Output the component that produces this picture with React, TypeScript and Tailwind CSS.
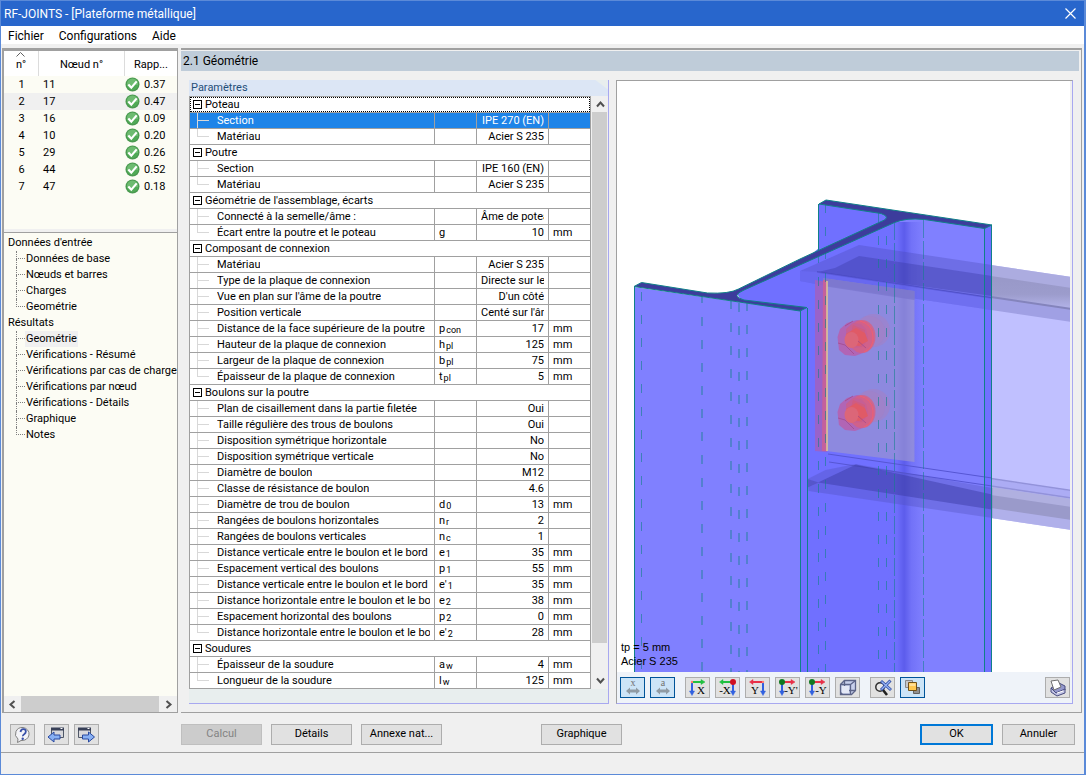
import React, { useState } from 'react';
import clsx from 'clsx';

interface Param {
  label: string;
  symbol?: string;
  sub?: string;
  value: string;
  unit?: string;
}

interface Group {
  title: string;
  params: Param[];
}

const NODES = [
  { node: '11', ratio: '0.37' },
  { node: '17', ratio: '0.47' },
  { node: '16', ratio: '0.09' },
  { node: '10', ratio: '0.20' },
  { node: '29', ratio: '0.26' },
  { node: '44', ratio: '0.52' },
  { node: '47', ratio: '0.18' },
];

const TREE = [
  { title: "Données d'entrée", items: ['Données de base', 'Nœuds et barres', 'Charges', 'Geométrie'] },
  {
    title: 'Résultats',
    items: [
      'Geométrie',
      'Vérifications - Résumé',
      'Vérifications par cas de charge',
      'Vérifications par nœud',
      'Vérifications - Détails',
      'Graphique',
      'Notes',
    ],
  },
];

const GROUPS: Group[] = [
  {
    title: 'Poteau',
    params: [
      { label: 'Section', value: 'IPE 270 (EN)' },
      { label: 'Matériau', value: 'Acier S 235' },
    ],
  },
  {
    title: 'Poutre',
    params: [
      { label: 'Section', value: 'IPE 160 (EN)' },
      { label: 'Matériau', value: 'Acier S 235' },
    ],
  },
  {
    title: "Géométrie de l'assemblage, écarts",
    params: [
      { label: 'Connecté à la semelle/âme :', value: 'Âme de poteau' },
      { label: 'Écart entre la poutre et le poteau', symbol: 'g', value: '10', unit: 'mm' },
    ],
  },
  {
    title: 'Composant de connexion',
    params: [
      { label: 'Matériau', value: 'Acier S 235' },
      { label: 'Type de la plaque de connexion', value: 'Directe sur le' },
      { label: "Vue en plan sur l'âme de la poutre", value: "D'un côté" },
      { label: 'Position verticale', value: "Centé sur l'âme" },
      { label: 'Distance de la face supérieure de la poutre', symbol: 'p', sub: 'con', value: '17', unit: 'mm' },
      { label: 'Hauteur de la plaque de connexion', symbol: 'h', sub: 'pl', value: '125', unit: 'mm' },
      { label: 'Largeur de la plaque de connexion', symbol: 'b', sub: 'pl', value: '75', unit: 'mm' },
      { label: 'Épaisseur de la plaque de connexion', symbol: 't', sub: 'pl', value: '5', unit: 'mm' },
    ],
  },
  {
    title: 'Boulons sur la poutre',
    params: [
      { label: 'Plan de cisaillement dans la partie filetée', value: 'Oui' },
      { label: 'Taille régulière des trous de boulons', value: 'Oui' },
      { label: 'Disposition symétrique horizontale', value: 'No' },
      { label: 'Disposition symétrique verticale', value: 'No' },
      { label: 'Diamètre de boulon', value: 'M12' },
      { label: 'Classe de résistance de boulon', value: '4.6' },
      { label: 'Diamètre de trou de boulon', symbol: 'd', sub: '0', value: '13', unit: 'mm' },
      { label: 'Rangées de boulons horizontales', symbol: 'n', sub: 'r', value: '2' },
      { label: 'Rangées de boulons verticales', symbol: 'n', sub: 'c', value: '1' },
      { label: 'Distance verticale entre le boulon et le bord', symbol: 'e', sub: '1', value: '35', unit: 'mm' },
      { label: 'Espacement vertical des boulons', symbol: 'p', sub: '1', value: '55', unit: 'mm' },
      { label: 'Distance verticale entre le boulon et le bord', symbol: "e'", sub: '1', value: '35', unit: 'mm' },
      { label: 'Distance horizontale entre le boulon et le bord', symbol: 'e', sub: '2', value: '38', unit: 'mm' },
      { label: 'Espacement horizontal des boulons', symbol: 'p', sub: '2', value: '0', unit: 'mm' },
      { label: 'Distance horizontale entre le boulon et le bord', symbol: "e'", sub: '2', value: '28', unit: 'mm' },
    ],
  },
  {
    title: 'Soudures',
    params: [
      { label: 'Épaisseur de la soudure', symbol: 'a', sub: 'w', value: '4', unit: 'mm' },
      { label: 'Longueur de la soudure', symbol: 'l', sub: 'w', value: '125', unit: 'mm' },
    ],
  },
];

const Chevron: React.FC<{ d: string }> = ({ d }) => (
  <svg width="9" height="9" viewBox="0 0 9 9" fill="none" stroke="#505050" strokeWidth="2">
    <path d={d} />
  </svg>
);

const CheckIcon = () => (
  <svg width="15" height="15" viewBox="0 0 15 15" className="shrink-0">
    <circle cx="7.5" cy="7.5" r="7" fill="#4a9a50" />
    <circle cx="7.5" cy="7" r="5.6" fill="#6dbb70" />
    <path d="M2 8a5.6 5.6 0 0 0 11 0z" fill="#4faa55" />
    <path d="M3.3 7.4l3 3.2 5.4-6.2" fill="none" stroke="#fff" strokeWidth="2.2" />
  </svg>
);

/* ---------- sidebar ---------- */

const NodeList = () => (
  <div className="h-[179px] shrink-0 border-t border-[#a0a0a0] bg-[#fcfcf4]">
    <table className="w-full table-fixed border-separate border-spacing-0">
      <thead>
        <tr className="h-[25px] bg-white">
          <th className="relative w-[35px] border-r border-[#dcdcdc] p-0 pt-1 font-normal">
            n°
            <svg className="absolute top-px left-3" width="9" height="5" viewBox="0 0 9 5" fill="none" stroke="#606060">
              <path d="M.5 4.5l4-4 4 4" />
            </svg>
          </th>
          <th className="w-[86px] border-r border-[#dcdcdc] p-0 pt-1 font-normal">Nœud n°</th>
          <th className="p-0 pt-1 font-normal">Rapp...</th>
        </tr>
      </thead>
      <tbody>
        {NODES.map((row, i) => (
          <tr key={row.node} className={clsx('h-[17px] leading-4', i === 1 && 'bg-[#f0f0f0]')}>
            <td className="p-0 text-center">{i + 1}</td>
            <td className="p-0 pl-1">{row.node}</td>
            <td className="p-0">
              <div className="flex items-center gap-1">
                <CheckIcon />
                {row.ratio}
              </div>
            </td>
          </tr>
        ))}
      </tbody>
    </table>
  </div>
);

const Tree = () => {
  const [active, setActive] = useState('1-0');
  return (
    <nav className="flex-1 overflow-hidden bg-[#fcfcf4] pt-0.5 leading-4 whitespace-nowrap">
      {TREE.map((section, s) => (
        <div key={section.title}>
          <div className="pl-1">{section.title}</div>
          <ul>
            {section.items.map((item, i) => {
              const last = i === section.items.length - 1;
              return (
                <li key={item} className="flex h-4">
                  <span className="ml-3 w-[9px] shrink-0">
                    <span className="block h-2 border-b border-l border-dotted border-[#808080]" />
                    {!last && <span className="block h-2 border-l border-dotted border-[#808080]" />}
                  </span>
                  <a
                    href="#"
                    onClick={() => setActive(`${s}-${i}`)}
                    className={clsx('px-px', active === `${s}-${i}` && 'bg-[#f0f0f0]')}
                  >
                    {item}
                  </a>
                </li>
              );
            })}
          </ul>
        </div>
      ))}
    </nav>
  );
};

const Sidebar = () => (
  <aside className="flex w-[176px] shrink-0 flex-col border-2 border-r border-b border-[#a0a0a0]">
    <NodeList />
    <div className="h-1 shrink-0 border-b border-[#a0a0a0] bg-[#f0f0f0]" />
    <Tree />
    <div className="flex h-4 shrink-0 items-center bg-[#f0f0f0]">
      <button aria-label="Défiler à gauche" className="flex w-[17px] justify-center">
        <Chevron d="M6.5 1l-4 3.5 4 3.5" />
      </button>
      <div className="h-full flex-1 bg-[#cdcdcd]" />
      <button aria-label="Défiler à droite" className="flex w-[18px] justify-center">
        <Chevron d="M2.5 1l4 3.5-4 3.5" />
      </button>
    </div>
  </aside>
);

/* ---------- parameter grid ---------- */

const CELL = 'h-4 border-r border-b border-[#a0a0a0] p-0 leading-[15px]';

const ParamRow: React.FC<{ param: Param; last: boolean; selected: boolean; onSelect: () => void }> = ({
  param,
  last,
  selected,
  onSelect,
}) => (
  <tr onClick={onSelect} className={clsx(selected && 'bg-[#1e84e8] text-white')}>
    <td className={CELL}>
      <div className="flex h-[15px]">
        <span className="ml-[7px] w-3 shrink-0">
          <span className="block h-2 border-b border-l border-[#d8d8d8]" />
          {!last && <span className="block h-[7px] border-l border-[#d8d8d8]" />}
        </span>
        <span className="mr-1 ml-2 overflow-hidden whitespace-nowrap">{param.label}</span>
      </div>
    </td>
    <td className={clsx(CELL, 'pl-1')}>
      <div className="flex h-[15px] gap-px">
        {param.symbol}
        {param.sub && <span className="pt-0.5 text-[9px]">{param.sub}</span>}
      </div>
    </td>
    <td className={CELL}>
      <div className="mx-1 h-[15px] overflow-hidden text-right whitespace-nowrap">{param.value}</div>
    </td>
    <td className={clsx(CELL, 'pl-1')}>{param.unit}</td>
  </tr>
);

const ParamGrid = () => {
  const [selected, setSelected] = useState('0-0');
  const [closed, setClosed] = useState<number[]>([]);

  const toggle = (g: number) => setClosed(closed.includes(g) ? closed.filter((x) => x !== g) : [...closed, g]);

  return (
    <section className="flex w-[420px] shrink-0 flex-col border-r border-b border-[#a8a8f0] bg-[#e8eeee]">
      <h2 className="h-4 bg-[#dce6f5] pl-0.5 leading-4 text-[#1f4e79] [clip-path:polygon(0_0,97%_0,100%_60%,100%_100%,0_100%)]">
        Paramètres
      </h2>
      <div className="flex bg-[#f0f0f0]">
        <table className="w-[402px] table-fixed border-separate border-spacing-0 border-t border-l border-[#a0a0a0] bg-white">
          <colgroup>
            <col />
            <col className="w-[42px]" />
            <col className="w-[72px]" />
            <col className="w-[42px]" />
          </colgroup>
          <tbody>
            {GROUPS.map((group, g) => (
              <React.Fragment key={group.title}>
                <tr>
                  <td colSpan={4} className={CELL}>
                    <div
                      className={clsx(
                        'flex h-[15px] items-center gap-[3px] pl-[3px]',
                        g === 0 && 'outline-1 -outline-offset-1 outline-dotted outline-black',
                      )}
                    >
                      <button
                        aria-label={`Réduire ${group.title}`}
                        onClick={() => toggle(g)}
                        className="flex h-[9px] w-[9px] items-center justify-center border border-black bg-white"
                      >
                        <span className="h-px w-[5px] bg-black" />
                      </button>
                      {group.title}
                    </div>
                  </td>
                </tr>
                {!closed.includes(g) &&
                  group.params.map((param, i) => (
                    <ParamRow
                      key={i}
                      param={param}
                      last={i === group.params.length - 1}
                      selected={selected === `${g}-${i}`}
                      onSelect={() => setSelected(`${g}-${i}`)}
                    />
                  ))}
              </React.Fragment>
            ))}
          </tbody>
        </table>
        <div className="ml-px flex flex-1 flex-col">
          <button aria-label="Défiler vers le haut" className="flex h-4 items-center justify-center">
            <Chevron d="M1 6.5l3.5-4 3.5 4" />
          </button>
          <div className="mr-px flex-1 bg-[#cdcdcd]" />
          <button aria-label="Défiler vers le bas" className="flex h-[46px] items-end justify-center pb-1">
            <Chevron d="M1 2.5l3.5 4 3.5-4" />
          </button>
        </div>
      </div>
      <div className="h-3" />
    </section>
  );
};

/* ---------- 3D view ---------- */

const Bolt: React.FC<{ dy: number }> = ({ dy }) => (
  <g transform={`translate(0 ${dy})`}>
    <circle cx="873.5" cy="330.5" r="16.5" fill="#b07cb8" opacity=".4" />
    <circle cx="869" cy="332" r="16" fill="#b07cb8" opacity=".25" />
    <path
      d="M837.5 337l2.5-8 7-6 10-3 9 2 7 8 1 10-4 9-7 4-8 3-10-1-6-5z"
      fill="#b562b0"
      opacity=".9"
    />
    <ellipse cx="862" cy="336.5" rx="13.5" ry="16.5" fill="#d8607f" opacity=".8" />
    <path d="M846 329l7-6 8 1 5 5 2 9-5 9-9 1-7-4z" fill="#c65f94" />
    <path d="M853 325l12 5-3 17-14-2z" fill="#d05c80" />
    <path d="M846 334l10-6 9 5 3 8-9 5-11-2z" fill="#e05a66" />
    <ellipse cx="851.5" cy="340" rx="7" ry="8" fill="#dc6678" />
    <path d="M860 321q12 3 13 15t-9 16" fill="none" stroke="#f06070" />
    <path d="M838 343l7 2 9 9M845 326l8-5M866 348l-8-7" fill="none" stroke="#a04888" strokeWidth=".7" />
  </g>
);

const JointView = () => (
  <svg viewBox="617 81 454 591" preserveAspectRatio="xMinYMin slice" className="absolute inset-0 h-full w-full">
    <defs>
      <linearGradient id="fillet">
        <stop offset="0" stopColor="#7070ff" />
        <stop offset=".25" stopColor="#6e6efc" />
        <stop offset=".45" stopColor="#5c5cec" />
        <stop offset=".65" stopColor="#7272f8" />
        <stop offset="1" stopColor="#8080ff" />
      </linearGradient>
      <linearGradient id="flange" x1="0" y1="0" x2="0" y2="1">
        <stop offset="0" stopColor="#9898c8" />
        <stop offset=".55" stopColor="#9c9ccc" />
        <stop offset="1" stopColor="#b4b4ea" />
      </linearGradient>
    </defs>

    {/* beam, part to the right of the column */}
    <path d="M991 265l80 12v253l-80-12z" fill="#c0c0ff" />
    <path d="M991 265l80 12v12l-80-12z" fill="#acace0" />
    <path d="M991 276l80 12v21l-80-12z" fill="url(#flange)" />
    <path d="M991 297l80 12v13l-80-12z" fill="#a0a0e4" />
    <path d="M991 297l80 12" stroke="#8484bc" strokeWidth="2" />
    <path d="M991 479l80 12v16l-80-12z" fill="#acacf4" />
    <path d="M991 478.5l80 12M991 486l80 12" stroke="#9292da" strokeWidth="1.5" />
    <path d="M991 487l80 12v22l-80-12z" fill="#b0b0e0" />
    <path d="M991 495l80 12v14l-80-12z" fill="#9a9aca" />
    <path d="M991 508l80 12v10l-80-12z" fill="#b0b0ea" />

    {/* column */}
    <path d="M819 204l173 22v446H819z" fill="#8080ff" />
    <path d="M807 258L819 248V204l60 9 10 6 6 3v450h-88z" fill="#7070ff" />
    <path d="M736 292L889 220l6 3v449h-95V312L742 302z" fill="#7070ff" />
    <path d="M888 222h36v450h-36z" fill="url(#fillet)" />
    <path d="M984 228l7.5-3v447H984z" fill="#7070ff" />
    <path d="M634 287l166 24v361H634z" fill="#8080ff" />
    <path d="M800 311l7.5-3v364H800z" fill="#7070ff" />

    {/* beam flanges seen through the column */}
    <path d="M800 271l59-26 133 20v45l-176-26-16-3z" fill="#4848b0" opacity=".32" />
    <path d="M835 268l24-12 133 20v20l-174-24z" fill="#3838a0" opacity=".36" />
    <path d="M817 272l175 26" stroke="#4444b8" strokeWidth="1.5" opacity=".75" />
    <path d="M800 271l18 1 174 26v12l-176-26-16-3z" fill="#7070ff" opacity=".4" />
    <path d="M828 454l164 24M829 462l163 24" stroke="#5656d4" strokeWidth="1" fill="none" />
    <path d="M807.5 479l18-9 30-6 137 24v30l-184-27z" fill="#5050b8" opacity=".34" />
    <path d="M818 482.5l38-18 136 30v15z" fill="#3838a0" opacity=".45" />
    <path d="M807.5 479l11 3.5-11 5z" fill="#4848b0" opacity=".5" />

    {/* connection plate */}
    <path d="M823 278l91.500 13v171L826 451z" fill="#a09acc" opacity=".62" />
    <path d="M823 278l91.500 13v9L823 286z" fill="#7470c8" opacity=".6" />
    <path d="M815 280l12 2v170l-12-1z" fill="#a060c0" opacity=".85" />
    <path d="M823 280h3.5v171H822z" fill="#c4609c" />
    <path d="M827 281v170" stroke="#e4c890" strokeWidth="1.5" />
    <Bolt dy={0} />
    <Bolt dy={75} />

    {/* column edges */}
    <g stroke="#108088" strokeWidth="1" fill="none">
      <path d="M634.5 287v385M807.5 308v364M818.5 204v50M991.5 225v447" />
      <path d="M800.5 311v361M984.5 228v444" />
      <path d="M894.5 222v450M923.5 220v452" strokeDasharray="18 3" opacity=".55" />
      <path
        d="M641.5 292v380M818.5 254v418M825.5 204v468M878.5 213v459M886.5 236v436"
        strokeDasharray="9 14"
        opacity=".6"
      />
      <path
        d="M702 294v378M731 300v372M739 303v369M747 302v370"
        strokeDasharray="9 14"
        strokeWidth="2"
        opacity=".4"
      />
    </g>

    {/* cut face of the I profile */}
    <path
      d="M634 286.5l7.5-4 66 10.5q22 1 31-4L800 259l79-36.500q14-5 2-9L819 204l7-4 166 25-7.5 3.500-60-9q-18-2-30 3L744 290q-14 6 0 10l63 7.5-7 3.500z"
      fill="#3c3c9c"
      stroke="#108088"
    />
  </svg>
);

/* ---------- view toolbar ---------- */

const AxisIcon: React.FC<{ label: string; color: string; flip?: boolean; dot?: string }> = ({
  label,
  color,
  flip,
  dot,
}) => (
  <svg width="20" height="18" viewBox="0 0 20 18">
    <g stroke={color} strokeWidth="2" fill={color}>
      <path d={flip ? 'M5 3h10' : 'M4 3h9'} />
      <path d={flip ? 'M5 0.5v5L1.5 3z' : 'M13 .5v5L17 3z'} strokeWidth="0.5" />
    </g>
    <g stroke="#3060e0" strokeWidth="2" fill="#3060e0">
      <path d={flip ? 'M15 3v10' : 'M4 3v10'} />
      <path d={flip ? 'M12.5 12h5L15 16.5z' : 'M1.5 12h5L4 16.5z'} strokeWidth="0.5" />
    </g>
    <circle cx={flip ? 15 : 4} cy="3" r={dot ? 3 : 1.2} fill={dot || '#ff8070'} />
    <text
      x={flip ? 7 : 13}
      y="15"
      textAnchor="middle"
      fontSize="11"
      fontFamily="Liberation Serif, serif"
      fill="#000"
    >
      {label}
    </text>
  </svg>
);

const DimIcon: React.FC<{ label: string }> = ({ label }) => (
  <svg width="18" height="18" viewBox="0 0 18 18">
    <text x="9" y="7" textAnchor="middle" fontSize="10" fontFamily="Liberation Serif, serif" fill="#707070">
      {label}
    </text>
    <path d="M2 12l4-3.500v2h6v-2l4 3.500-4 3.500v-2H6v2z" fill="#909ba4" />
  </svg>
);

const CubeIcon = () => (
  <svg width="18" height="18" viewBox="0 0 18 18" strokeWidth="1.3" stroke="#5c6488">
    <path d="M1.5 5.500l4-4h11v10l-4 4h-11z" fill="#c8d0ec" />
    <path d="M1.5 5.500h10v10M11.500 5.500l5-4M5.500 1.500v10h11M5.500 11.500l-4 4" fill="none" />
    <path d="M3 7h7v7H3z" fill="#e4e8f6" stroke="none" />
  </svg>
);

const SearchOffIcon = () => (
  <svg width="18" height="18" viewBox="0 0 18 18" fill="none">
    <circle cx="6" cy="8" r="4.200" fill="#e8e8e8" stroke="#303030" strokeWidth="1.500" />
    <path d="M9 11l4 5" stroke="#202020" strokeWidth="2.600" />
    <path d="M7 2l10 9M16.500 1.500L7 11" stroke="#3050a8" strokeWidth="3" />
    <path d="M7.500 2.500l9 8M16 2l-8.500 8.500" stroke="#98b4f4" strokeWidth="1.200" />
  </svg>
);

const LayersIcon = () => (
  <svg width="17" height="17" viewBox="0 0 17 17">
    <path d="M1.5 1.500h7v7h-7z" fill="#c8c8c8" stroke="#888" />
    <path d="M9.500 8.500h6v6h-6z" fill="#909090" stroke="#606060" />
    <path d="M4.500 3.500h8v8h-8z" fill="#ffc850" stroke="#705018" />
    <path d="M5.500 4.500h6v2.500h-6z" fill="#ffe09a" />
  </svg>
);

const PrinterIcon = () => (
  <svg width="18" height="18" viewBox="0 0 18 18" stroke="#484c80">
    <path d="M2 9l5 5 9-3V7l-6-3z" fill="#9498cc" />
    <path d="M2 9v4l6 4 8-3v-4l-9 4z" fill="#c4c6e6" />
    <path d="M2 2l7-1 3 7-7 3z" fill="#fff" stroke="#707070" />
    <path d="M8 14l6-2" stroke="#fff" />
  </svg>
);

const ToolButton: React.FC<{ label: string; pressed?: boolean; children: React.ReactNode }> = ({
  label,
  pressed,
  children,
}) => (
  <button
    aria-label={label}
    aria-pressed={pressed}
    className={clsx(
      'flex h-[21px] w-[25px] shrink-0 items-center justify-center border',
      pressed ? 'border-[#005499] bg-[#cce4f7]' : 'border-[#adadad] bg-[#e1e1e1]',
    )}
  >
    {children}
  </button>
);

const Viewer = () => (
  <section className="flex min-w-0 flex-1 flex-col border border-[#a8a8f0] border-t-[#a0a0a0] border-l-[#a0a0a0]">
    <div className="relative mr-0.5 flex-1 overflow-hidden bg-white">
      <JointView />
      <div className="absolute bottom-1 left-1 font-['Liberation_Sans',sans-serif] text-[11px] leading-[14px]">
        <p>tp = 5 mm</p>
        <p>Acier S 235</p>
      </div>
    </div>
    <div className="flex h-[31px] shrink-0 items-center gap-[5px] bg-[#eff3f9] pr-0.5 pl-[3px]">
      <ToolButton label="Cotes x" pressed><DimIcon label="x" /></ToolButton>
      <ToolButton label="Cotes a" pressed><DimIcon label="a" /></ToolButton>
      <span />
      <ToolButton label="Vue X"><AxisIcon label="X" color="#20c040" /></ToolButton>
      <ToolButton label="Vue -X"><AxisIcon label="-X" color="#20c040" flip dot="#d01020" /></ToolButton>
      <ToolButton label="Vue Y"><AxisIcon label="Y" color="#e83048" flip /></ToolButton>
      <ToolButton label="Vue -Y'"><AxisIcon label="-Y'" color="#e83048" dot="#107820" /></ToolButton>
      <ToolButton label="Vue -Y"><AxisIcon label="-Y" color="#e83048" dot="#107820" /></ToolButton>
      <ToolButton label="Isométrie"><CubeIcon /></ToolButton>
      <span />
      <ToolButton label="Annuler le zoom"><SearchOffIcon /></ToolButton>
      <ToolButton label="Transparence" pressed><LayersIcon /></ToolButton>
      <span className="flex-1" />
      <ToolButton label="Imprimer"><PrinterIcon /></ToolButton>
    </div>
  </section>
);

/* ---------- footer ---------- */

const HelpIcon = () => (
  <svg width="18" height="18" viewBox="0 0 18 18">
    <path d="M9 1.500a7 6.500 0 1 1-2 13l-3.500 2 .5-3.500A7 6.500 0 0 1 9 1.500z" fill="#f4f4f8" stroke="#808080" />
    <path d="M6.500 6q.5-3 3-2.800t2.300 2.600q0 1.400-1.600 2.400t-1.300 2" fill="none" stroke="#3850a8" strokeWidth="1.800" />
    <circle cx="8.700" cy="12.800" r="1.200" fill="#3850a8" />
  </svg>
);

const SheetIcon: React.FC<{ dir: 'left' | 'right' }> = ({ dir }) => (
  <svg width="19" height="18" viewBox="0 0 19 18">
    <g transform={dir === 'left' ? 'translate(3 0)' : undefined}>
      <path d="M1.5 2.500h12v9h-12z" fill="#d8d8dc" stroke="#505868" />
      <path d="M1 1.500h13v3H1z" fill="#384058" />
      <path d="M10.500 2.500h2" stroke="#fff" />
    </g>
    <path
      d={dir === 'left' ? 'M1 11l6-5v3h6v4H7v3z' : 'M17.5 11l-6-5v3h-6v4h6v3z'}
      fill="#88b0f4"
      stroke="#2848a0"
    />
  </svg>
);

const DialogButton: React.FC<React.ButtonHTMLAttributes<HTMLButtonElement>> = ({ className, ...props }) => (
  <button
    className={clsx('h-[21px] border text-center whitespace-nowrap', className)}
    {...props}
  />
);

const PLAIN = 'border-[#adadad] bg-[#e1e1e1]';

const Footer = () => (
  <footer className="flex h-[39px] shrink-0 items-center gap-[9px] px-[9px] pt-1">
    <ToolButton label="Aide"><HelpIcon /></ToolButton>
    <div className="flex w-[128px] items-center gap-[5px]">
      <ToolButton label="Précédent"><SheetIcon dir="left" /></ToolButton>
      <ToolButton label="Suivant"><SheetIcon dir="right" /></ToolButton>
    </div>
    <DialogButton disabled className="w-[81px] border-[#bfbfbf] bg-[#cccccc] text-[#838383]">Calcul</DialogButton>
    <DialogButton className={clsx('w-[81px]', PLAIN)}>Détails</DialogButton>
    <DialogButton className={clsx('w-[81px]', PLAIN)}>Annexe nat...</DialogButton>
    <DialogButton className={clsx('ml-[90px] w-[81px]', PLAIN)}>Graphique</DialogButton>
    <span className="flex-1" />
    <DialogButton className="w-[73px] border-2 border-[#0078d7] bg-[#e1e1e1]">OK</DialogButton>
    <DialogButton className={clsx('w-[73px]', PLAIN)}>Annuler</DialogButton>
  </footer>
);

export default function App() {
  return (
    <div className="flex h-screen flex-col border border-r-2 border-[#5b8ad8] bg-[#f0f0f0] font-[Roboto,sans-serif] text-[11px] text-black select-none">
      <header className="flex h-[25px] shrink-0 items-center justify-between bg-[#2866cc] pr-2 pl-[3px] text-[12px] text-white">
        <h1>RF-JOINTS - [Plateforme métallique]</h1>
        <button aria-label="Fermer">
          <svg width="11" height="11" viewBox="0 0 11 11" stroke="#fff" strokeWidth="1.200">
            <path d="M.5.5l10 10M10.500.5l-10 10" />
          </svg>
        </button>
      </header>
      <nav className="flex h-[18px] shrink-0 items-center gap-[15px] bg-white pt-0.5 pl-[7px] text-[12px]">
        <button>Fichier</button>
        <button>Configurations</button>
        <button>Aide</button>
      </nav>
      <div className="mt-1 flex min-h-0 flex-1 gap-[3px] pl-px">
        <Sidebar />
        <main className="mr-0.5 flex min-w-0 flex-1 flex-col border-t-2 border-r border-b border-[#a0a0a0]">
          <h2 className="mt-px mr-0.5 h-5 shrink-0 bg-[#bfccd9] pl-0.5 text-[12px] leading-5">2.1 Géométrie</h2>
          <div className="flex min-h-0 flex-1 gap-[7px] pt-[9px] pr-2 pb-2 pl-2">
            <ParamGrid />
            <Viewer />
          </div>
        </main>
      </div>
      <Footer />
      <div className="h-[22px] shrink-0 border-t border-[#a0a0a0]" />
    </div>
  );
}
